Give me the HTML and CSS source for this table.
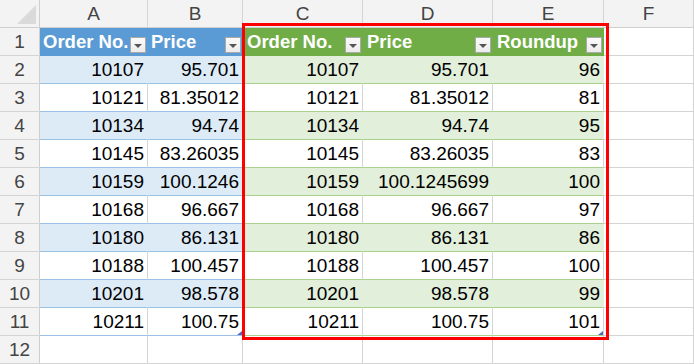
FILE: index.html
```html
<!DOCTYPE html>
<html lang="en">
<head>
  <meta charset="UTF-8" />
  <title>Roundup - Sheet1</title>
  <link rel="stylesheet" href="styles.css">
</head>
<body>
  <div class="sheet">
    <!-- column headers -->
    <div class="corner">
      <svg width="40" height="28" viewBox="0 0 40 28"><polygon points="36,5 36,24 17,24" fill="#dadada"/></svg>
    </div>
    <div class="hd">A</div>
    <div class="hd">B</div>
    <div class="hd">C</div>
    <div class="hd">D</div>
    <div class="hd">E</div>
    <div class="hd">F</div>

    <!-- row 1: table headers -->
    <div class="rh">1</div>
    <div class="c b-head">Order No.<span class="flt"></span></div>
    <div class="c b-head">Price<span class="flt"></span></div>
    <div class="c g-head">Order No.<span class="flt"></span></div>
    <div class="c g-head">Price<span class="flt"></span></div>
    <div class="c g-head">Roundup<span class="flt"></span></div>
    <div class="c"></div>

    <div class="rh">2</div>
    <div class="c num b-band">10107</div>
    <div class="c num b-band">95.701</div>
    <div class="c num g-band">10107</div>
    <div class="c num g-band">95.701</div>
    <div class="c num g-band">96</div>
    <div class="c"></div>

    <div class="rh">3</div>
    <div class="c num b-plain">10121</div>
    <div class="c num b-plain">81.35012</div>
    <div class="c num g-plain">10121</div>
    <div class="c num g-plain">81.35012</div>
    <div class="c num g-plain">81</div>
    <div class="c"></div>

    <div class="rh">4</div>
    <div class="c num b-band">10134</div>
    <div class="c num b-band">94.74</div>
    <div class="c num g-band">10134</div>
    <div class="c num g-band">94.74</div>
    <div class="c num g-band">95</div>
    <div class="c"></div>

    <div class="rh">5</div>
    <div class="c num b-plain">10145</div>
    <div class="c num b-plain">83.26035</div>
    <div class="c num g-plain">10145</div>
    <div class="c num g-plain">83.26035</div>
    <div class="c num g-plain">83</div>
    <div class="c"></div>

    <div class="rh">6</div>
    <div class="c num b-band">10159</div>
    <div class="c num b-band">100.1246</div>
    <div class="c num g-band">10159</div>
    <div class="c num g-band">100.1245699</div>
    <div class="c num g-band">100</div>
    <div class="c"></div>

    <div class="rh">7</div>
    <div class="c num b-plain">10168</div>
    <div class="c num b-plain">96.667</div>
    <div class="c num g-plain">10168</div>
    <div class="c num g-plain">96.667</div>
    <div class="c num g-plain">97</div>
    <div class="c"></div>

    <div class="rh">8</div>
    <div class="c num b-band">10180</div>
    <div class="c num b-band">86.131</div>
    <div class="c num g-band">10180</div>
    <div class="c num g-band">86.131</div>
    <div class="c num g-band">86</div>
    <div class="c"></div>

    <div class="rh">9</div>
    <div class="c num b-plain">10188</div>
    <div class="c num b-plain">100.457</div>
    <div class="c num g-plain">10188</div>
    <div class="c num g-plain">100.457</div>
    <div class="c num g-plain">100</div>
    <div class="c"></div>

    <div class="rh">10</div>
    <div class="c num b-band">10201</div>
    <div class="c num b-band">98.578</div>
    <div class="c num g-band">10201</div>
    <div class="c num g-band">98.578</div>
    <div class="c num g-band">99</div>
    <div class="c"></div>

    <div class="rh">11</div>
    <div class="c num b-plain">10211</div>
    <div class="c num b-plain">100.75<span class="handle"></span></div>
    <div class="c num g-plain">10211</div>
    <div class="c num g-plain">100.75</div>
    <div class="c num g-plain">101<span class="handle"></span></div>
    <div class="c"></div>

    <div class="rh">12</div>
    <div class="c"></div>
    <div class="c"></div>
    <div class="c"></div>
    <div class="c"></div>
    <div class="c"></div>
    <div class="c"></div>

    <!-- highlight around the green table -->
    <div class="mark"></div>
  </div>
</body>
</html>
```

FILE: styles.css
```css
:root {
  --grid: #d4d4d4;
  --head-bg: #f3f3f3;
  --head-line: #cfcfcf;
  --blue: #5b9bd5;
  --blue-band: #ddebf7;
  --blue-line: #9bc2e6;
  --green: #70ad47;
  --green-band: #e2efda;
  --green-line: #a9d08e;
}

* {
  box-sizing: border-box;
  margin: 0;
  padding: 0;
}

body {
  background: #fff;
  font-family: "Liberation Sans", Arial, sans-serif;
  overflow: hidden;
}

.sheet {
  position: relative;
  display: grid;
  grid-template-columns: 40px 108px 95px 120px 130px 111px 90px;
  grid-auto-rows: 28px;
  width: 694px;
  font-size: 19px;
  color: #000;
}

.corner {
  background: var(--head-bg);
  border-right: 1px solid var(--head-line);
  border-bottom: 1px solid var(--head-line);
}

.corner svg {
  display: block;
}

.hd {
  background: var(--head-bg);
  border-right: 1px solid var(--grid);
  border-bottom: 1px solid var(--head-line);
  color: #444;
  text-align: center;
  line-height: 27px;
}

.rh {
  background: var(--head-bg);
  border-right: 1px solid var(--head-line);
  border-bottom: 1px solid var(--grid);
  color: #444;
  text-align: center;
  line-height: 28px;
}

.c {
  position: relative;
  background: #fff;
  border-right: 1px solid var(--grid);
  border-bottom: 1px solid var(--grid);
  padding: 0 3px;
  line-height: 28px;
  white-space: nowrap;
  overflow: hidden;
}

.num {
  text-align: right;
}

/* table header cells */
.b-head,
.g-head {
  display: flex;
  align-items: flex-start;
  justify-content: space-between;
  padding: 0 1px 0 3px;
  color: #fff;
  font-weight: bold;
  font-size: 18.5px;
}

.b-head {
  background: var(--blue);
  border-right-color: var(--blue);
  border-bottom-color: var(--blue);
}

.g-head {
  background: var(--green);
  border-right-color: var(--green);
  border-bottom-color: var(--green);
  padding-left: 4px;
}

.b-band {
  background: var(--blue-band);
  border-right-color: var(--blue-band);
  border-bottom-color: var(--blue-line);
}

.b-plain {
  border-bottom-color: var(--blue-line);
}

.g-band {
  background: var(--green-band);
  border-right-color: var(--green-band);
  border-bottom-color: var(--green-line);
}

.g-plain {
  border-bottom-color: var(--green-line);
}

/* filter dropdown button */
.flt {
  position: relative;
  flex: none;
  width: 16px;
  height: 16px;
  margin-top: 9px;
  border: 1px solid #a9a9a9;
  background: linear-gradient(#fafafa, #ececec);
}

.flt::after {
  content: "";
  position: absolute;
  left: 3px;
  top: 6px;
  border-left: 4px solid transparent;
  border-right: 4px solid transparent;
  border-top: 4px solid #555;
}

/* table resize handle */
.handle {
  position: absolute;
  right: 0;
  bottom: 0;
  width: 5px;
  height: 4px;
  background: #4f64c0;
  clip-path: polygon(100% 0, 100% 100%, 0 100%);
}

.mark {
  position: absolute;
  left: 242px;
  top: 23px;
  width: 367px;
  height: 317px;
  border: 3px solid #f00;
  pointer-events: none;
}
```
